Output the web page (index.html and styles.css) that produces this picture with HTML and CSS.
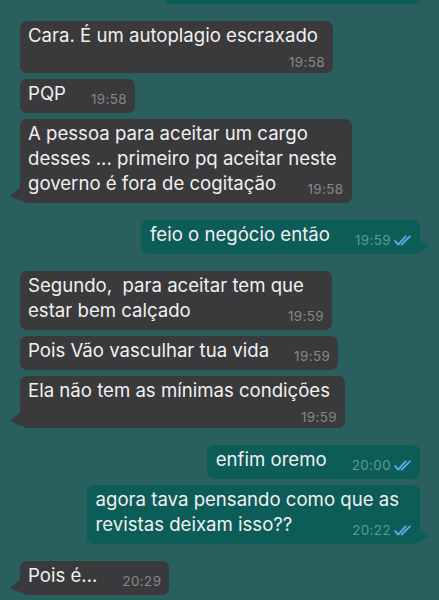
FILE: index.html
```html
<!DOCTYPE html>
<html lang="pt-BR">
<head>
  <meta charset="UTF-8">
  <title>Conversa</title>
  <link rel="stylesheet" href="styles.css">
</head>
<body>
  <div class="chat">
    <div class="bubble out stub"></div>

    <div class="bubble in first">Cara. É um autoplagio escraxado<span class="time below">19:58</span></div>
    <div class="bubble in">PQP<span class="time">19:58</span></div>
    <div class="bubble in tail">A pessoa para aceitar um cargo<br>desses ... primeiro pq aceitar neste<br>governo é fora de cogitação<span class="time">19:58</span></div>

    <div class="bubble out first tail">feio o negócio então<span class="time">19:59<svg class="ticks" viewBox="0 0 17 10"><path d="M1 5.5 L4 8.8 L11 1.2 M7.2 8.8 L15 1.2"/></svg></span></div>

    <div class="bubble in first wide">Segundo,&nbsp; para aceitar tem que<br>estar bem calçado<span class="time">19:59</span></div>
    <div class="bubble in">Pois Vão vasculhar tua vida<span class="time">19:59</span></div>
    <div class="bubble in tail">Ela não tem as mínimas condições<span class="time below">19:59</span></div>

    <div class="bubble out first">enfim oremo<span class="time">20:00<svg class="ticks" viewBox="0 0 17 10"><path d="M1 5.5 L4 8.8 L11 1.2 M7.2 8.8 L15 1.2"/></svg></span></div>
    <div class="bubble out tail">agora tava pensando como que as<br>revistas deixam isso??<span class="time">20:22<svg class="ticks" viewBox="0 0 17 10"><path d="M1 5.5 L4 8.8 L11 1.2 M7.2 8.8 L15 1.2"/></svg></span></div>

    <div class="bubble in first tail">Pois é...<span class="time">20:29</span></div>
  </div>
</body>
</html>
```

FILE: styles.css
```css
body {
  margin: 0;
  background: #29605e;
  font-family: Inter, "Liberation Sans", sans-serif;
  color: #f0f0f0;
}
.chat {
  display: flex;
  flex-direction: column;
  padding: 0 19px 20px 20px;
}
.bubble {
  position: relative;
  display: flow-root;
  max-width: 360px;
  margin-top: 6px;
  padding: 2px 15px 7px 8px;
  border-radius: 7px;
  font-size: 18.6px;
  line-height: 25px;
}
.bubble.first {
  margin-top: 17px;
}
.bubble.in {
  align-self: flex-start;
  background: #3a3a3c;
}
.bubble.out {
  align-self: flex-end;
  background: #0c5c58;
  padding-left: 9px;
  padding-right: 21px;
}
.bubble.stub {
  width: 255px;
  height: 4px;
  padding: 0;
  margin-top: 0;
  border-radius: 0 0 7px 7px;
  box-sizing: border-box;
}
.bubble.wide {
  min-width: 289px;
}
.time {
  float: right;
  margin: 12px -7px 0 25px;
  font-size: 13.4px;
  line-height: 13px;
  letter-spacing: 0.4px;
  color: #87878a;
}
.out .time {
  margin-right: -13px;
  color: #5b9a96;
}
.time.below {
  float: none;
  display: block;
  margin: 7px -7px -4px 0;
  line-height: 15px;
  text-align: right;
}
.ticks {
  width: 18px;
  height: 11px;
  margin-left: 3px;
  vertical-align: -1px;
  fill: none;
  stroke: #57b0ea;
  stroke-width: 1.7;
  stroke-linecap: round;
  stroke-linejoin: round;
}
.bubble.tail::after {
  content: "";
  position: absolute;
  bottom: 2px;
  width: 11px;
  height: 14px;
}
.bubble.in.tail::after {
  left: -10px;
  background: #3a3a3c;
  clip-path: polygon(100% 0, 100% 100%, 0 62%);
}
.bubble.out.tail::after {
  right: -9px;
  background: #0c5c58;
  clip-path: polygon(0 0, 0 100%, 100% 62%);
}
```
